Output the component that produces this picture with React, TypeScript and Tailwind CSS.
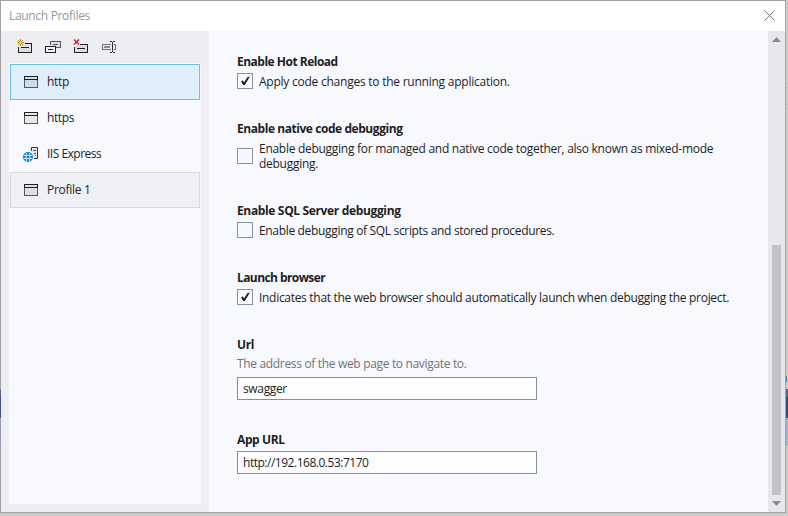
import type { ReactNode } from "react";

function NewIcon() {
  return (
    <svg width="16" height="16" viewBox="0 0 16 16" shapeRendering="crispEdges">
      <path d="M7 4.500H14.500V13.500H1.500V8" fill="#dedee1" />
      <path d="M7.500 4.500H14.500V13.500H1.500V8" fill="none" stroke="#212121" />
      <path d="M4 8.500H12" stroke="#212121" />
      <g stroke="#c08a1e" strokeWidth="1" shapeRendering="auto">
        <path d="M3.500 0V7M0 3.500H7M1 1L6 6M6 1L1 6" />
        <circle cx="3.500" cy="3.500" r="1.500" fill="#fff" />
      </g>
    </svg>
  );
}

function DuplicateIcon() {
  return (
    <svg width="16" height="16" viewBox="0 0 16 16" shapeRendering="crispEdges">
      <path d="M5.500 6V2.500H15.500V8.500H11" fill="#dedee1" stroke="#58585b" />
      <path d="M8 5.500H13" stroke="#58585b" />
      <path d="M0.500 7.500H10.500V13.500H0.500Z" fill="#f3f3f5" stroke="#212121" />
      <path d="M3 10.500H8" stroke="#212121" />
    </svg>
  );
}

function DeleteIcon() {
  return (
    <svg width="16" height="16" viewBox="0 0 16 16" shapeRendering="crispEdges">
      <path d="M7 5H14V13H2V8Z" fill="#dedee1" />
      <path d="M7 5.500H14.500V13.500H1.500V8" fill="none" stroke="#212121" />
      <path d="M4 9.500H12" stroke="#212121" />
      <path d="M1 0.500L6 5.500M6 0.500L1 5.500" stroke="#c5283d" strokeWidth="1.500" shapeRendering="auto" />
    </svg>
  );
}

function RenameIcon() {
  return (
    <svg width="16" height="16" viewBox="0 0 16 16" shapeRendering="crispEdges">
      <path d="M10 5.500H1.500V10.500H10M13 5.500H14.500V10.500H13" fill="none" stroke="#717174" />
      <path d="M3 7H9V9H3Z" fill="#8a8a8d" />
      <path d="M9 2.500H11M12 2.500H14M11.500 3V13M9 13.500H11M12 13.500H14" stroke="#303033" />
    </svg>
  );
}

function WindowIcon() {
  return (
    <svg width="16" height="16" viewBox="0 0 16 16" shapeRendering="crispEdges">
      <path d="M1.500 2.500H14.500V13.500H1.500Z" fill="#000" fillOpacity="0.07" stroke="#58585b" />
      <path d="M1.500 6V2.500H14.500V6M1 5.500H15" fill="none" stroke="#212121" />
    </svg>
  );
}

function ServerIcon() {
  return (
    <svg width="16" height="16" viewBox="0 0 16 16">
      <path d="M8.500 5V1.500H14.500V12.500H11" fill="#e6e7ea" stroke="#303033" />
      <path d="M10 4.500H13M11 7.500H13M12 9.500H13" stroke="#4b4b4e" />
      <circle cx="5" cy="11" r="5" fill="#1683d0" />
      <path d="M1 9.500H9M1 12.500H9M3.500 7Q2.500 11 3.500 15M6.500 7Q7.500 11 6.500 15" fill="none" stroke="#d6eafa" strokeWidth="0.900" />
    </svg>
  );
}

function Profile({ name, icon, tone = "border-transparent", tracking }: { name: string; icon: ReactNode; tone?: string; tracking: string }) {
  return (
    <div className={`flex h-9 items-center gap-2 border pl-3 text-[12px] ${tone}`}>
      {icon}
      <span className={tracking}>{name}</span>
    </div>
  );
}

function Heading({ tracking, children }: { tracking: string; children: ReactNode }) {
  return <h2 className={`h-4 whitespace-nowrap text-[12px] leading-4 font-bold ${tracking}`}>{children}</h2>;
}

function Check({ on = false, tracking, children }: { on?: boolean; tracking: string; children: ReactNode }) {
  return (
    <div className="flex items-center gap-1.5">
      <span className="h-4 w-4 shrink-0 border border-[#8591a8] bg-[#f5f8ff]">
        {on && (
          <svg width="14" height="14" viewBox="0 0 14 14">
            <path d="M3 7.200L4.900 6.400L6 8.600L9.800 2.700H11.700L6.900 11H5.200Z" fill="#1e1e1e" />
          </svg>
        )}
      </span>
      <div className={`whitespace-nowrap text-[12px] leading-[15px] ${tracking}`}>{children}</div>
    </div>
  );
}

function Field({ tracking, children }: { tracking: string; children: ReactNode }) {
  return (
    <div className="flex h-[23px] w-[300px] items-center border border-[#858fa3] bg-[#fdfdfe] pl-[5px] text-[12px]">
      <span className={tracking}>{children}</span>
    </div>
  );
}

export default function App() {
  return (
    <div className="flex h-[516px] w-[788px] flex-col overflow-hidden bg-[#cacacc] font-['Open_Sans','Noto_Sans',sans-serif] text-[#1e1e1e]">
      <div className="flex h-[513px]">
        <div className="flex w-px flex-col bg-[#a2a2a5]">
          <div className="mt-[389px] h-2 bg-[#58658b]" />
          <div className="h-[21px] bg-[#415180]" />
          <div className="h-7 bg-[#9299b2]" />
        </div>
        <div className="flex w-[785px] flex-col border-t border-r border-b border-[#a2a2a5] bg-[#f7f9fe]">
          <header className="flex h-[30px] shrink-0 items-center justify-between bg-white pr-[10px] pl-2 text-[12px] text-[#999]">
            <span className="tracking-[-0.32px]">Launch Profiles</span>
            <svg className="mb-px" width="11" height="11" viewBox="0 0 11 11">
              <path d="M0.500 0.500L10.500 10.500M10.500 0.500L0.500 10.500" stroke="#777" />
            </svg>
          </header>
          <div className="flex min-h-0 flex-1">
            <aside className="flex w-[208px] flex-col bg-[#eeeef2] pr-2 pb-2 pl-2">
              <div className="flex h-8 items-center gap-3 pl-2">
                <NewIcon />
                <DuplicateIcon />
                <DeleteIcon />
                <RenameIcon />
              </div>
              <div className="flex-1 bg-[#f7f9fe] px-px pt-px">
                <Profile name="http" tracking="tracking-[-0.3px]" icon={<WindowIcon />} tone="border-[#6cbfe5] bg-[#deeefa]" />
                <Profile name="https" tracking="tracking-[-0.4px]" icon={<WindowIcon />} />
                <Profile name="IIS Express" tracking="tracking-[-0.5px]" icon={<ServerIcon />} />
                <Profile name="Profile 1" tracking="tracking-[-0.28px]" icon={<WindowIcon />} tone="border-[#d9dade] bg-[#eff0f3]" />
              </div>
            </aside>
            <main className="flex flex-1 flex-col pt-[23px] pl-7">
              <section className="h-[67px]">
                <Heading tracking="tracking-[-0.5px]">Enable Hot Reload</Heading>
                <div className="pt-[3px]">
                  <Check on tracking="tracking-[-0.24px]">Apply code changes to the running application.</Check>
                </div>
              </section>
              <section className="h-[82px]">
                <Heading tracking="tracking-[-0.44px]">Enable native code debugging</Heading>
                <div className="pt-1">
                  <Check tracking="tracking-[-0.28px]">
                    Enable debugging for managed and native code together, also known as mixed-mode
                    <br />
                    debugging.
                  </Check>
                </div>
              </section>
              <section className="h-[67px]">
                <Heading tracking="tracking-[-0.35px]">Enable SQL Server debugging</Heading>
                <div className="pt-[3px]">
                  <Check tracking="tracking-[-0.33px]">Enable debugging of SQL scripts and stored procedures.</Check>
                </div>
              </section>
              <section className="h-[67px]">
                <Heading tracking="tracking-[-0.58px]">Launch browser</Heading>
                <div className="pt-[3px]">
                  <Check on tracking="tracking-[-0.3px]">Indicates that the web browser should automatically launch when debugging the project.</Check>
                </div>
              </section>
              <section className="h-[95px]">
                <Heading tracking="tracking-[-0.38px]">Url</Heading>
                <p className="mt-[3px] mb-[5px] text-[12px] leading-4 tracking-[-0.33px] text-[#737376]">The address of the web page to navigate to.</p>
                <Field tracking="tracking-[-0.35px]">swagger</Field>
              </section>
              <section>
                <Heading tracking="tracking-[-0.38px]">App URL</Heading>
                <div className="pt-[3px]">
                  <Field tracking="tracking-[-0.48px]">http://192.168.0.53:7170</Field>
                </div>
              </section>
            </main>
            <div className="flex w-[17px] flex-col items-center bg-[#e8e8ec] pt-1.5 pb-1.5">
              <svg width="9" height="5" viewBox="0 0 9 5"><path d="M4.500 0L9 5H0Z" fill="#868999" /></svg>
              <div className="mt-[203px] h-[250px] w-[9px] bg-[#c2c3c9]" />
              <svg className="mt-1.5 shrink-0" width="9" height="5" viewBox="0 0 9 5"><path d="M0 0H9L4.500 5Z" fill="#868999" /></svg>
            </div>
          </div>
        </div>
        <div className="flex flex-1 flex-col bg-[#cdcdce]">
          <div className="mt-[87px] h-px bg-[#b9b9c0]" />
          <div className="mt-4 h-px bg-[#b9b9c0]" />
          <div className="mt-[268px] h-[3px] bg-[#d8d7b0]" />
          <div className="h-1.5 w-px bg-[#3783b0]" />
          <div className="mt-[7px] h-2 bg-[#58658b]" />
          <div className="h-[21px] bg-[#344980]" />
          <div className="h-7 bg-[#a5aecd]" />
        </div>
      </div>
    </div>
  );
}
